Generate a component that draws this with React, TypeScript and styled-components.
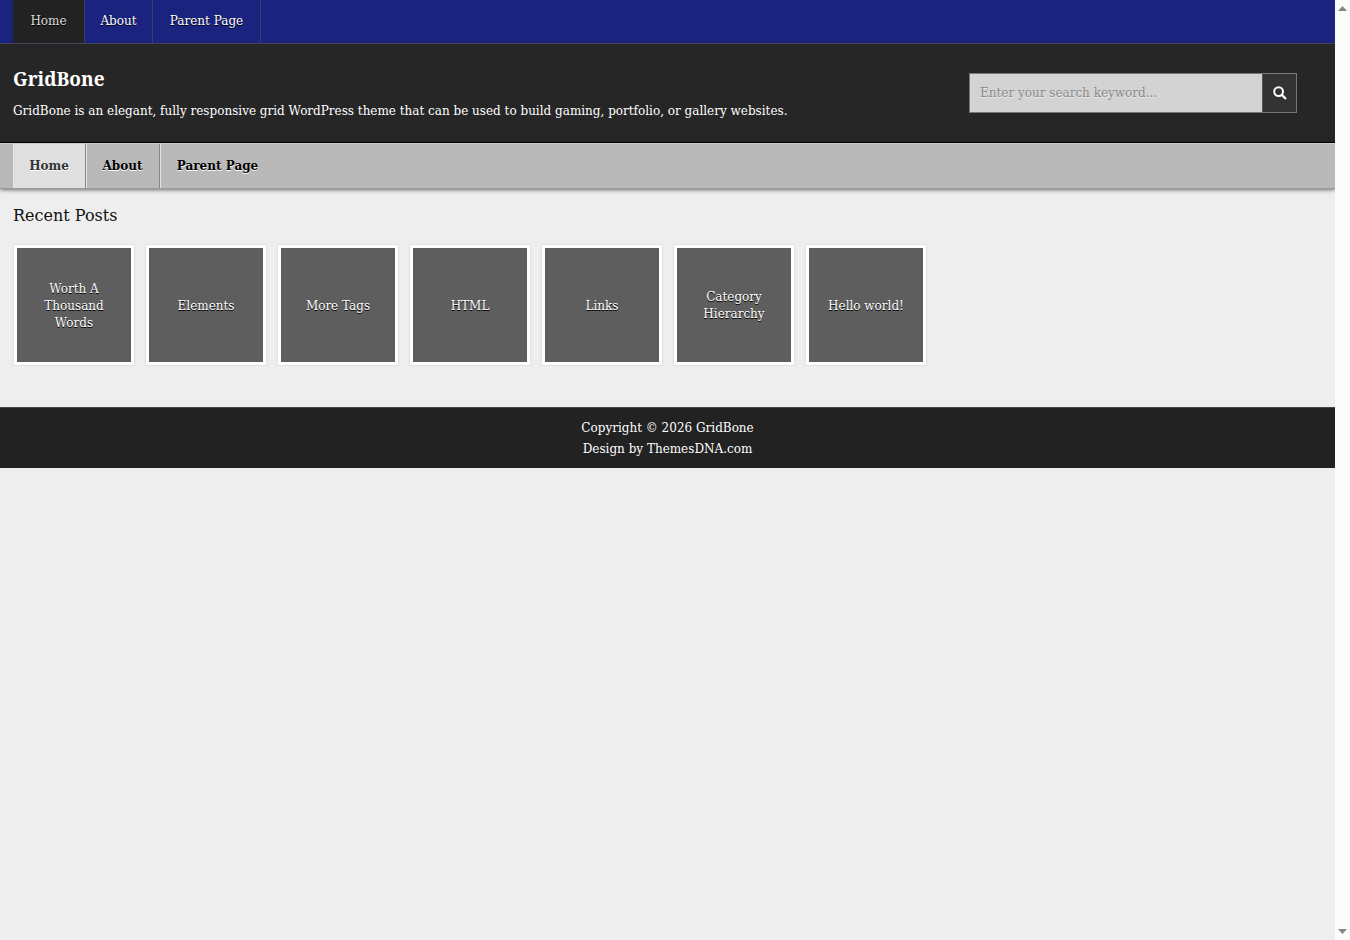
import React from "react";
import styled, { createGlobalStyle } from "styled-components";

const serif = `"Roboto Slab", "DejaVu Serif", serif`;

const GlobalStyle = createGlobalStyle`
  *, *::before, *::after { box-sizing: border-box; }
  body {
    margin: 0;
    background: #eeeeee;
    color: #111111;
    font: 12px/17px ${serif};
  }
  h1, h2, p, ul { margin: 0; padding: 0; }
  ul { list-style: none; }
  a { color: inherit; text-decoration: none; }
`;

const Shell = styled.div`
  display: flex;
  align-items: flex-start;
  min-height: 100vh;
`;

const Page = styled.div`
  flex: 1;
  min-width: 0;
`;

const ScrollTrack = styled.div`
  position: sticky;
  top: 0;
  flex: 0 0 15px;
  height: 100vh;
  padding: 6px 3px;
  background: #fcfcfc;
  display: flex;
  flex-direction: column;
  justify-content: space-between;
  svg { display: block; fill: #858585; }
`;

const TopNav = styled.nav`
  height: 44px;
  padding-left: 13px;
  background: #1a237e;
  border-bottom: 1px solid #444455;
`;

const MenuList = styled.ul`
  display: flex;
  height: 100%;
`;

const TopLink = styled.a<{ $width: number; $current?: boolean }>`
  display: flex;
  align-items: center;
  justify-content: center;
  width: ${(p) => p.$width}px;
  height: 43px;
  border-right: 1px solid #3c4068;
  background: ${(p) => (p.$current ? "#222222" : "transparent")};
  color: ${(p) => (p.$current ? "#dddddd" : "#ffffff")};
  text-shadow: 0 1px 0 #000000;
  white-space: nowrap;
`;

const Header = styled.header`
  display: flex;
  align-items: center;
  justify-content: space-between;
  gap: 24px;
  height: 99px;
  padding: 0 38px 0 13px;
  background: #262626;
  border-bottom: 1px solid #000000;
  color: #ffffff;
`;

const SiteTitle = styled.h1`
  font: bold 19px/24px "Noto Serif", "DejaVu Serif Condensed", serif;
  margin-bottom: 12px;
`;

const SearchForm = styled.form`
  display: flex;
  flex: 0 0 328px;
  height: 40px;
  border: 1px solid #777777;
`;

const SearchInput = styled.input`
  flex: 1;
  min-width: 0;
  padding: 0 10px;
  border: 0;
  border-radius: 0;
  background: #d3d3d3;
  color: #333333;
  font: 12px/17px ${serif};
  text-shadow: 0 1px 0 #eeeeee;
  &::placeholder { color: #888888; opacity: 1; }
`;

const SearchButton = styled.button`
  display: flex;
  align-items: center;
  justify-content: center;
  width: 34px;
  padding: 0;
  border: 0;
  border-left: 1px solid #555555;
  background: #333333;
  color: #ffffff;
`;

const PrimaryNav = styled.nav`
  height: 46px;
  padding-left: 13px;
  background: #b9b9b9;
  border-top: 1px solid #cccccc;
  border-bottom: 1px solid #999999;
  box-shadow: 0 1px 4px rgba(0, 0, 0, 0.55);
`;

const PrimaryLink = styled.a<{ $width: number; $current?: boolean; $last?: boolean }>`
  display: flex;
  align-items: center;
  justify-content: center;
  width: ${(p) => p.$width}px;
  height: 44px;
  border-right: ${(p) => (p.$last ? "0" : "1px solid #888888")};
  box-shadow: inset 1px 0 0 #e4e4e4;
  background: ${(p) => (p.$current ? "#e0e0e0" : "transparent")};
  color: ${(p) => (p.$current ? "#333333" : "#000000")};
  font-weight: bold;
  text-shadow: 0 1px 0 #ffffff;
  white-space: nowrap;
`;

const Main = styled.main`
  padding: 16px 13px 42px;
`;

const SectionTitle = styled.h2`
  font: normal 16px/22px ${serif};
  margin-bottom: 18px;
`;

const PostGrid = styled.ul`
  display: grid;
  grid-template-columns: repeat(auto-fill, 120px);
  gap: 12px;
  padding-left: 1px;
`;

const PostTile = styled.a`
  display: flex;
  align-items: center;
  justify-content: center;
  height: 120px;
  padding: 2px 15px 0;
  border: 3px solid #ffffff;
  box-shadow: 0 0 1px 1px #e2e2e2;
  background: #5e5e5e;
  color: #ffffff;
  text-align: center;
  text-shadow: 0 1px 0 #000000;
`;

const Footer = styled.footer`
  padding: 10px 0 8px;
  background: #222222;
  border-top: 1px solid #444444;
  color: #ffffff;
  text-align: center;
  line-height: 21px;
`;

const topItems = [
  { label: "Home", width: 72 },
  { label: "About", width: 68 },
  { label: "Parent Page", width: 108 },
];

const primaryItems = [
  { label: "Home", width: 73 },
  { label: "About", width: 74 },
  { label: "Parent Page", width: 115 },
];

const posts = [
  "Worth A Thousand Words",
  "Elements",
  "More Tags",
  "HTML",
  "Links",
  "Category Hierarchy",
  "Hello world!",
];

export default function App() {
  return (
    <>
      <GlobalStyle />
      <Shell>
        <Page>
          <TopNav aria-label="Secondary menu">
            <MenuList>
              {topItems.map((item, i) => (
                <li key={item.label}>
                  <TopLink href="#" $width={item.width} $current={i === 0}>{item.label}</TopLink>
                </li>
              ))}
            </MenuList>
          </TopNav>
          <Header>
            <div>
              <SiteTitle><a href="#">GridBone</a></SiteTitle>
              <p>GridBone is an elegant, fully responsive grid WordPress theme that can be used to build gaming, portfolio, or gallery websites.</p>
            </div>
            <SearchForm role="search" onSubmit={(e) => e.preventDefault()}>
              <SearchInput type="search" aria-label="Search" placeholder="Enter your search keyword..." />
              <SearchButton type="submit" aria-label="Submit search">
                <svg width="14" height="14" viewBox="0 0 14 14" fill="none" stroke="currentColor" strokeWidth="2">
                  <circle cx="5.6" cy="5.6" r="4.4" />
                  <path d="M8.9 8.9 13 13" strokeWidth="2.2" />
                </svg>
              </SearchButton>
            </SearchForm>
          </Header>
          <PrimaryNav aria-label="Primary menu">
            <MenuList>
              {primaryItems.map((item, i) => (
                <li key={item.label}>
                  <PrimaryLink href="#" $width={item.width} $current={i === 0} $last={i === primaryItems.length - 1}>
                    {item.label}
                  </PrimaryLink>
                </li>
              ))}
            </MenuList>
          </PrimaryNav>
          <Main>
            <SectionTitle>Recent Posts</SectionTitle>
            <PostGrid>
              {posts.map((title) => (
                <li key={title}>
                  <PostTile href="#">{title}</PostTile>
                </li>
              ))}
            </PostGrid>
          </Main>
          <Footer>
            <p>Copyright © 2026 GridBone</p>
            <p><a href="#">Design by ThemesDNA.com</a></p>
          </Footer>
        </Page>
        <ScrollTrack aria-hidden="true">
          <svg width="9" height="5" viewBox="0 0 9 5"><path d="M0 5 4.5 0 9 5z" /></svg>
          <svg width="9" height="5" viewBox="0 0 9 5"><path d="M0 0 4.5 5 9 0z" /></svg>
        </ScrollTrack>
      </Shell>
    </>
  );
}
